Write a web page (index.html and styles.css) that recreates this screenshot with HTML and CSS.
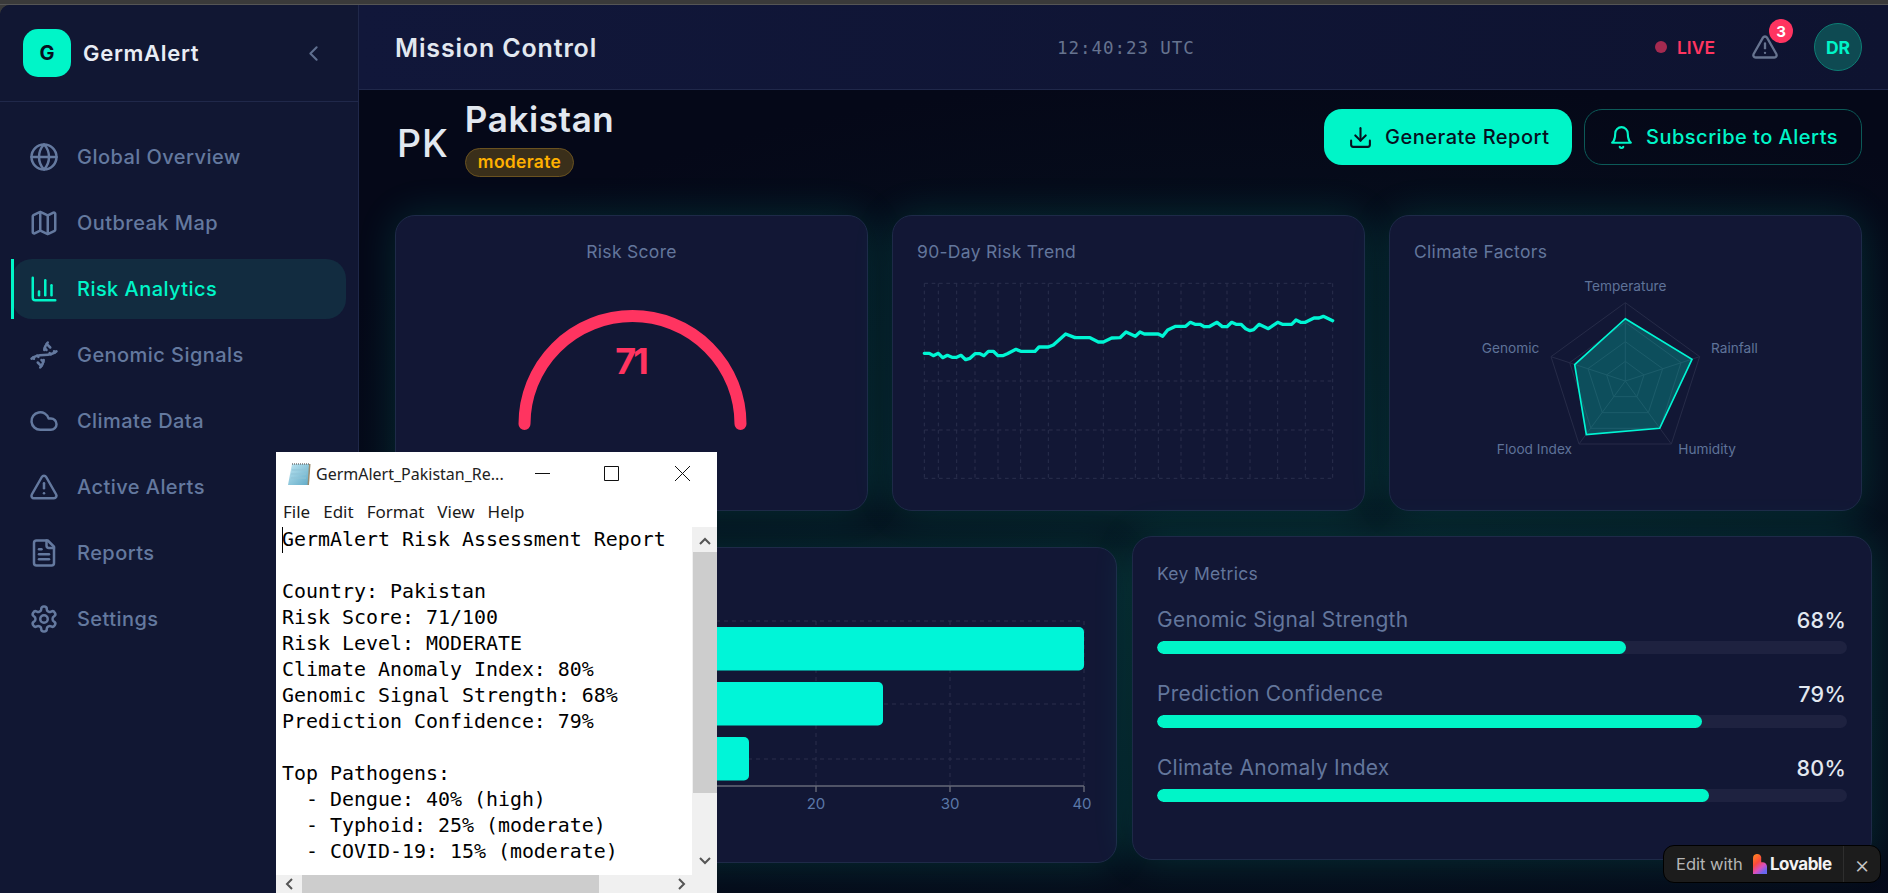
FILE: index.html
```html
<!DOCTYPE html>
<html lang="en">
<head>
<meta charset="utf-8">
<title>GermAlert</title>
<link rel="stylesheet" href="styles.css">
</head>
<body>
<div class="chrome"></div>
<div class="shell">
  <aside class="sidebar">
    <div class="brand">
      <div class="logo">G</div>
      <span class="brand-name">GermAlert</span>
      <svg class="ic chev" viewBox="0 0 24 24"><path d="m15 18-6-6 6-6"/></svg>
    </div>
    <nav class="nav">
      <a class="nav-item"><svg class="ic" viewBox="0 0 24 24"><circle cx="12" cy="12" r="10"/><path d="M12 2a14.5 14.5 0 0 0 0 20 14.5 14.5 0 0 0 0-20"/><path d="M2 12h20"/></svg>Global Overview</a>
      <a class="nav-item"><svg class="ic" viewBox="0 0 24 24"><path d="M14.106 5.553a2 2 0 0 0 1.788 0l3.659-1.83A1 1 0 0 1 21 4.619v12.764a1 1 0 0 1-.553.894l-4.553 2.277a2 2 0 0 1-1.788 0l-4.212-2.106a2 2 0 0 0-1.788 0l-3.659 1.83A1 1 0 0 1 3 19.381V6.618a1 1 0 0 1 .553-.894l4.553-2.277a2 2 0 0 1 1.788 0z"/><path d="M15 5.764v15"/><path d="M9 3.236v15"/></svg>Outbreak Map</a>
      <a class="nav-item active"><svg class="ic" viewBox="0 0 24 24"><path d="M3 3v16a2 2 0 0 0 2 2h16"/><path d="M18 17V9"/><path d="M13 17V5"/><path d="M8 17v-3"/></svg>Risk Analytics</a>
      <a class="nav-item"><svg class="ic" viewBox="0 0 24 24"><path d="m10 16 1.5 1.5"/><path d="m14 8-1.5-1.5"/><path d="M15 2c-1.798 1.998-2.518 3.995-2.807 5.993"/><path d="m16.5 10.5 1 1"/><path d="m17 6-2.891-2.891"/><path d="M2 15c6.667-6 13.333 0 20-6"/><path d="m20 9 .891.891"/><path d="M3.109 14.109 4 15"/><path d="m6.5 12.5 1 1"/><path d="m7 18 2.891 2.891"/><path d="M9 22c1.798-1.998 2.518-3.995 2.807-5.993"/></svg>Genomic Signals</a>
      <a class="nav-item"><svg class="ic" viewBox="0 0 24 24"><path d="M17.5 19H9a7 7 0 1 1 6.71-9h1.79a4.5 4.5 0 1 1 0 9Z"/></svg>Climate Data</a>
      <a class="nav-item"><svg class="ic" viewBox="0 0 24 24"><path d="m21.73 18-8-14a2 2 0 0 0-3.48 0l-8 14A2 2 0 0 0 4 21h16a2 2 0 0 0 1.73-3"/><path d="M12 9v4"/><path d="M12 17h.01"/></svg>Active Alerts</a>
      <a class="nav-item"><svg class="ic" viewBox="0 0 24 24"><path d="M15 2H6a2 2 0 0 0-2 2v16a2 2 0 0 0 2 2h12a2 2 0 0 0 2-2V7Z"/><path d="M14 2v4a2 2 0 0 0 2 2h4"/><path d="M10 9H8"/><path d="M16 13H8"/><path d="M16 17H8"/></svg>Reports</a>
      <a class="nav-item"><svg class="ic" viewBox="0 0 24 24"><path d="M12.22 2h-.44a2 2 0 0 0-2 2v.18a2 2 0 0 1-1 1.73l-.43.25a2 2 0 0 1-2 0l-.15-.08a2 2 0 0 0-2.73.73l-.22.38a2 2 0 0 0 .73 2.73l.15.1a2 2 0 0 1 1 1.72v.51a2 2 0 0 1-1 1.74l-.15.09a2 2 0 0 0-.73 2.73l.22.38a2 2 0 0 0 2.73.73l.15-.08a2 2 0 0 1 2 0l.43.25a2 2 0 0 1 1 1.73V20a2 2 0 0 0 2 2h.44a2 2 0 0 0 2-2v-.18a2 2 0 0 1 1-1.73l.43-.25a2 2 0 0 1 2 0l.15.08a2 2 0 0 0 2.73-.73l.22-.39a2 2 0 0 0-.73-2.73l-.15-.08a2 2 0 0 1-1-1.74v-.5a2 2 0 0 1 1-1.74l.15-.09a2 2 0 0 0 .73-2.73l-.22-.38a2 2 0 0 0-2.73-.73l-.15.08a2 2 0 0 1-2 0l-.43-.25a2 2 0 0 1-1-1.73V4a2 2 0 0 0-2-2z"/><circle cx="12" cy="12" r="3"/></svg>Settings</a>
    </nav>
  </aside>

  <div class="main">
    <header class="topbar">
      <h1 class="page-title">Mission Control</h1>
      <div class="clock">12:40:23 UTC</div>
      <div class="top-right">
        <div class="live"><span class="live-dot"></span>LIVE</div>
        <div class="alert-btn">
          <svg class="ic alert-ic" viewBox="0 0 24 24"><path d="m21.73 18-8-14a2 2 0 0 0-3.48 0l-8 14A2 2 0 0 0 4 21h16a2 2 0 0 0 1.73-3"/><path d="M12 9v4"/><path d="M12 17h.01"/></svg>
          <span class="count">3</span>
        </div>
        <div class="avatar">DR</div>
      </div>
    </header>

    <main class="content">
      <section class="title-row">
        <div class="country">
          <div class="code">PK</div>
          <div class="country-info">
            <div class="country-name">Pakistan</div>
            <span class="level">moderate</span>
          </div>
        </div>
        <div class="actions">
          <button class="btn btn-solid"><svg class="ic" viewBox="0 0 24 24"><path d="M21 15v4a2 2 0 0 1-2 2H5a2 2 0 0 1-2-2v-4"/><polyline points="7 10 12 15 17 10"/><line x1="12" y1="15" x2="12" y2="3"/></svg>Generate Report</button>
          <button class="btn btn-outline"><svg class="ic" viewBox="0 0 24 24"><path d="M6 8a6 6 0 0 1 12 0c0 7 3 9 3 9H3s3-2 3-9"/><path d="M10.3 21a1.94 1.94 0 0 0 3.4 0"/></svg>Subscribe to Alerts</button>
        </div>
      </section>

      <section class="row-one">
        <div class="card">
          <div class="card-title center">Risk Score</div>
          <svg class="chart" viewBox="420 265 422 220">
            <path class="gauge" d="M524 424a108 108 0 0 1 216 0"/>
            <text class="gauge-num" x="630" y="374" text-anchor="middle">71</text>
          </svg>
        </div>
        <div class="card">
          <div class="card-title">90-Day Risk Trend</div>
          <svg class="chart" viewBox="82 165 1267 660">
            <g class="grid-l">
              <path d="M103 220H1328M103 513H1328M103 660H1328M103 805H1328"/>
              <path d="M103 220V805M145 220V805M200 220V805M255 220V805M324 220V805M392 220V805M475 220V805M557 220V805M640 220V805M736 220V805M805 220V805M873 220V805M942 220V805M1011 220V805M1080 220V805M1163 220V805M1246 220V805M1328 220V805"/>
            </g>
            <polyline class="trend" points="103,430 118,430 130,437 145,430 158,443 172,436 186,442 200,442 213,436 227,449 240,445 255,431 270,431 282,437 295,424 310,424 324,437 338,437 352,431 378,418 392,424 435,424 447,411 475,411 490,405 527,372 555,383 600,383 625,396 640,396 665,384 690,383 708,366 736,379 750,366 763,372 805,372 818,379 833,360 857,349 887,349 901,337 915,343 930,343 943,350 957,350 981,337 997,350 1011,350 1025,337 1038,343 1053,343 1067,356 1080,362 1091,359 1107,343 1135,356 1163,337 1177,343 1205,343 1218,330 1232,337 1246,337 1272,324 1287,324 1300,319 1328,332"/>
          </svg>
        </div>
        <div class="card">
          <div class="card-title">Climate Factors</div>
          <svg class="chart" viewBox="104 165 1267 660">
            <g class="grid-r">
              <polygon points="737,278 960,440 875,702 598,702 514,440"/>
              <polygon points="737,337 904,458 841,655 634,655 570,458"/>
              <polygon points="737,395 849,476 806,608 668,608 625,476"/>
              <polygon points="737,454 793,495 772,560 702,560 681,495"/>
              <path d="M737 513V278M737 513L960 440M737 513L875 702M737 513L598 702M737 513L514 440"/>
            </g>
            <polygon class="radar" points="737,326 937,448 840,655 620,674 585,464"/>
            <g class="radar-label">
              <text x="737" y="243" text-anchor="middle">Temperature</text>
              <text x="994" y="429">Rainfall</text>
              <text x="896" y="732">Humidity</text>
              <text x="577" y="732" text-anchor="end">Flood Index</text>
              <text x="479" y="429" text-anchor="end">Genomic</text>
            </g>
          </svg>
        </div>
      </section>

      <section class="row-two">
        <div class="card card-bars">
          <svg class="bars" viewBox="420 600 672 236">
            <g class="grid-b">
              <path d="M548 621H1084M548 649H1084M548 704H1084M548 759H1084"/>
              <path d="M548 621V786M682 621V786M816 621V786M950 621V786M1084 621V786"/>
            </g>
            <rect class="bar" x="548" y="627" width="536" height="43.5" rx="5"/>
            <rect class="bar" x="548" y="682" width="335" height="43.5" rx="5"/>
            <rect class="bar" x="548" y="737" width="201" height="43.5" rx="5"/>
            <path class="axis" d="M548 786H1084M816 786v6M950 786v6M1084 786v6M682 786v6M548 786v6"/>
            <g class="tick">
              <text x="816" y="809" text-anchor="middle">20</text>
              <text x="950" y="809" text-anchor="middle">30</text>
              <text x="1082" y="809" text-anchor="middle">40</text>
            </g>
          </svg>
        </div>
        <div class="card card-metrics">
          <div class="card-title">Key Metrics</div>
          <div class="metric">
            <div class="metric-head"><span>Genomic Signal Strength</span><b>68%</b></div>
            <div class="track"><div class="fill" style="width:68%"></div></div>
          </div>
          <div class="metric">
            <div class="metric-head"><span>Prediction Confidence</span><b>79%</b></div>
            <div class="track"><div class="fill" style="width:79%"></div></div>
          </div>
          <div class="metric">
            <div class="metric-head"><span>Climate Anomaly Index</span><b>80%</b></div>
            <div class="track"><div class="fill" style="width:80%"></div></div>
          </div>
        </div>
      </section>
    </main>
  </div>
</div>

<div class="notepad">
  <div class="np-title">
    <svg class="np-icon" viewBox="0 0 24 24">
      <defs><linearGradient id="npg" x1="0" y1="0" x2="1" y2="1"><stop offset="0" stop-color="#bfe6f2"/><stop offset="1" stop-color="#5fa9c6"/></linearGradient></defs>
      <polygon points="5,2 23,2 21,23 1,23" fill="url(#npg)"/>
      <polygon points="22,2 23.5,2 22,23 20.5,23" fill="#9a8a6c"/>
      <path d="M5 2h18" stroke="#777" stroke-width="1.6" stroke-dasharray="1 1"/>
      <path d="M5 8h15M4 12h15M4 16h15" stroke="#8fc3d6" stroke-width="1"/>
    </svg>
    <span class="np-name">GermAlert_Pakistan_Re...</span>
    <svg class="np-ctrl" viewBox="0 0 170 20"><path d="M0 10.5h15M69.5 3.5h14v14h-14zM140 3l15 15M155 3l-15 15"/></svg>
  </div>
  <div class="np-menu"><span>File</span><span>Edit</span><span>Format</span><span>View</span><span>Help</span></div>
  <div class="np-body">
    <pre class="np-text">GermAlert Risk Assessment Report

Country: Pakistan
Risk Score: 71/100
Risk Level: MODERATE
Climate Anomaly Index: 80%
Genomic Signal Strength: 68%
Prediction Confidence: 79%

Top Pathogens:
  - Dengue: 40% (high)
  - Typhoid: 25% (moderate)
  - COVID-19: 15% (moderate)</pre>
    <div class="np-vscroll">
      <svg class="np-arrow" viewBox="0 0 12 8"><path d="M1 7l5-5 5 5"/></svg>
      <div class="np-vthumb"></div>
      <svg class="np-arrow np-down" viewBox="0 0 12 8"><path d="M1 1l5 5 5-5"/></svg>
    </div>
  </div>
  <div class="np-hscroll">
    <svg class="np-arrow-h" viewBox="0 0 8 12"><path d="M7 1L2 6l5 5"/></svg>
    <div class="np-hthumb"></div>
    <svg class="np-arrow-h" viewBox="0 0 8 12"><path d="M1 1l5 5-5 5"/></svg>
  </div>
</div>

<div class="lovable">
  <span class="lov-edit">Edit with</span>
  <svg class="lov-logo" viewBox="0 0 14 20">
    <defs><linearGradient id="lovg" x1="0" y1="0" x2="0.6" y2="1"><stop offset="0" stop-color="#ff8a1e"/><stop offset=".45" stop-color="#fb4a3c"/><stop offset=".75" stop-color="#d94fc0"/><stop offset="1" stop-color="#6a66ee"/></linearGradient></defs>
    <path d="M0 4.2A4.2 4.2 0 0 1 8.2 3V8.2h1.4A4.4 4.4 0 0 1 14 12.6V20H0z" fill="url(#lovg)"/>
  </svg>
  <span class="lov-name">Lovable</span>
  <span class="lov-x">×</span>
</div>
</body>
</html>
```

FILE: styles.css
```css
* { box-sizing: border-box; }
html, body { margin: 0; height: 100%; overflow: hidden; }
body { background: #3a3a3a; font-family: Inter, "Liberation Sans", sans-serif; color: #e2e8f0; }
.chrome { height: 5px; background: #3a3a3a; border-bottom: 1px solid #555; }
.shell { display: flex; height: 888px; background: #111733; border-radius: 10px 0 0 0; overflow: hidden; }
.ic { fill: none; stroke: currentColor; stroke-width: 2; stroke-linecap: round; stroke-linejoin: round; width: 30px; height: 30px; flex: none; }

.sidebar { width: 359px; flex: none; background: #111733; border-right: 1px solid #20284a; }
.brand { height: 97px; display: flex; align-items: center; padding: 0 32px 0 23px; border-bottom: 1px solid #20284a; }
.logo { width: 48px; height: 48px; border-radius: 15px; background: #00f5c8; color: #07101f; font-weight: 700; font-size: 20px; display: flex; align-items: center; justify-content: center; }
.brand-name { margin-left: 12px; font-size: 22px; font-weight: 600; letter-spacing: .7px; color: #e8edf5; flex: 1; }
.chev { color: #5f6f8f; width: 25px; height: 25px; }
.nav { padding: 25px 12px 0; display: flex; flex-direction: column; gap: 6px; }
.nav-item { height: 60px; display: flex; align-items: center; gap: 18px; padding: 0 15px 0 17px; font-size: 20px; font-weight: 500; letter-spacing: .45px; color: #64799f; border-radius: 20px; }
.nav-item .ic { color: #64799f; width: 30px; height: 30px; }
.nav-item.active { background: #122c40; color: #00f5c8; position: relative; }
.nav-item.active .ic { color: #00f5c8; }
.nav-item.active::before { content: ""; position: absolute; left: -1px; top: 0; bottom: 0; width: 3px; background: #00f5c8; }

.main { flex: 1; min-width: 0; background: #050818; display: flex; flex-direction: column; }
.topbar { height: 85px; flex: none; display: flex; align-items: center; padding: 0 26px 0 36px; background: linear-gradient(90deg, #11173a, #0e1330); border-bottom: 1px solid #20284a; position: relative; }
.page-title { margin: 2px 0 0; font-size: 25px; font-weight: 600; letter-spacing: .85px; color: #e2e8f0; width: 662px; flex: none; }
.clock { margin-top: 2px; font-family: "DejaVu Sans Mono", monospace; font-size: 17.5px; letter-spacing: .95px; color: #66738f; }
.top-right { margin-left: auto; display: flex; align-items: center; }
.live { display: flex; align-items: center; gap: 10px; color: #ff3560; font-weight: 600; font-size: 17.5px; }
.live-dot { width: 12px; height: 12px; border-radius: 50%; background: #a52a50; }
.alert-btn { position: relative; margin-left: 36px; margin-right: 35px; display: flex; }
.alert-ic { width: 28px; height: 28px; color: #66738f; }
.count { position: absolute; right: -14px; top: -14px; width: 24px; height: 24px; border-radius: 50%; background: #ff3460; color: #fff; font-size: 15px; font-weight: 700; display: flex; align-items: center; justify-content: center; }
.avatar { width: 48px; height: 48px; border-radius: 50%; background: #0e4a52; border: 1px solid #0d7d74; color: #00f5c8; font-weight: 700; font-size: 17.5px; display: flex; align-items: center; justify-content: center; }

.content { flex: 1; padding: 7px 26px 0 36px; background: radial-gradient(1100px 500px at 60% 60%, #071722 0%, #050818 100%); }
.title-row { display: flex; align-items: center; justify-content: space-between; height: 80px; }
.country { display: flex; align-items: center; gap: 16px; }
.code { font-size: 37.5px; font-weight: 500; line-height: 45px; padding-top: 12px; letter-spacing: 1px; color: #e2e8f0; margin-left: 2px; }
.country-name { font-size: 35px; font-weight: 600; line-height: 44px; letter-spacing: .6px; color: #e2e8f0; }
.level { display: inline-block; margin-top: 7px; height: 29px; line-height: 26px; padding: 0 12px; border-radius: 15px; background: #3a2f1a; border: 1px solid #6a5220; color: #ffb000; font-size: 17.5px; font-weight: 600; letter-spacing: .3px; vertical-align: top; }
.actions { display: flex; gap: 12px; }
.btn { height: 56px; border-radius: 18px; display: flex; align-items: center; gap: 12px; font-family: inherit; font-size: 20px; font-weight: 500; letter-spacing: .5px; padding: 0 0 0 24px; white-space: nowrap; }
.btn .ic { width: 25px; height: 25px; }
.btn-solid { background: #00f5c8; border: 0; color: #07101f; width: 248px; }
.btn-outline { background: transparent; border: 1px solid #0c5a58; color: #00f5c8; width: 278px; }

.card { background: #121735; border: 1px solid #1e2a48; border-radius: 20px; padding: 24px; box-shadow: 0 0 40px rgba(0, 245, 200, .14); }
.card-title { font-size: 17.5px; line-height: 25px; letter-spacing: .3px; color: #63769c; }
.center { text-align: center; }
.chart { display: block; width: 100%; height: 220px; }
.row-one { display: grid; grid-template-columns: repeat(3, 1fr); gap: 24px; margin-top: 38px; }
.row-one .card { height: 296px; padding-top: 23px; }
.row-one .card-title { line-height: 26px; }
.row-two { display: grid; grid-template-columns: 722px 740px; gap: 15px; margin: 25px -10px 0 0; align-items: start; }
.card-bars { height: 316px; margin-top: 11px; padding-top: 52px; }
.bars { display: block; width: 672px; height: 236px; }
.card-metrics { height: 324px; }

.gauge { fill: none; stroke: #ff3460; stroke-width: 12; stroke-linecap: round; }
.gauge-num { fill: #ff3460; font-size: 36px; font-weight: 700; letter-spacing: -3px; }
.grid-l path { fill: none; stroke: #2a2f4c; stroke-width: 3; stroke-dasharray: 11 11; }
.trend { fill: none; stroke: #00f5d4; stroke-width: 10; stroke-linejoin: round; stroke-linecap: round; }
.grid-r polygon, .grid-r path { fill: none; stroke: #262b48; stroke-width: 3; }
.radar { fill: rgba(0, 245, 212, .25); stroke: #00f5d4; stroke-width: 5; }
.radar-label text { fill: #5f7399; font-size: 41px; font-family: Inter, sans-serif; }
.grid-b path { fill: none; stroke: #2a2f4c; stroke-width: 1; stroke-dasharray: 4 4; }
.bar { fill: #00f5d8; }
.axis { fill: none; stroke: #666a78; stroke-width: 1.4; }
.tick text { fill: #5b78a8; font-size: 15px; }

.metric { margin-top: 20px; }
.metric + .metric { margin-top: 26.5px; }
.metric-head { display: flex; justify-content: space-between; font-size: 21px; line-height: 28px; letter-spacing: .25px; color: #63769c; padding-right: 1px; }
.metric-head b { color: #e2e8f0; font-weight: 500; font-size: 21.5px; }
.track { height: 13px; margin-top: 6.5px; border-radius: 7px; background: #1e2240; overflow: hidden; }
.fill { height: 100%; border-radius: 7px; background: #00f5c8; }

.notepad { position: absolute; left: 276px; top: 452px; width: 441px; height: 441px; background: #fff; color: #000; overflow: hidden; font-family: "Noto Sans", "Open Sans", sans-serif; }
.np-title { height: 44px; display: flex; align-items: center; padding: 0 27px 0 11px; position: relative; }
.np-icon { width: 24px; height: 24px; flex: none; }
.np-name { margin-left: 5px; font-size: 16px; color: #222; white-space: nowrap; }
.np-ctrl { position: absolute; left: 259px; top: 11px; width: 170px; height: 20px; fill: none; stroke: #111; stroke-width: 1; }
.np-menu { height: 31px; display: flex; align-items: center; padding-left: 7px; gap: 13px; font-size: 17px; color: #1a1a1a; }
.np-body { height: 348px; display: flex; }
.np-text { flex: 1; margin: 0; padding: 0 0 0 6px; font-family: "DejaVu Sans Mono", monospace; font-size: 19.93px; line-height: 26px; color: #000; position: relative; overflow: hidden; }
.np-text::before { content: ""; position: absolute; left: 6px; top: 0; width: 1px; height: 26px; background: #000; }
.np-vscroll { width: 25px; background: #f0f0f0; display: flex; flex-direction: column; align-items: center; }
.np-arrow { width: 12px; height: 8px; margin: 10px 0 7px; fill: none; stroke: #555; stroke-width: 2; flex: none; }
.np-down { margin: auto 0 10px; }
.np-vthumb { width: 24px; height: 241px; background: #cdcdcd; }
.np-hscroll { height: 18px; background: #f0f0f0; display: flex; align-items: center; }
.np-arrow-h { width: 8px; height: 12px; margin: 0 9px; fill: none; stroke: #555; stroke-width: 2; flex: none; }
.np-hthumb { width: 297px; height: 18px; background: #cdcdcd; margin-right: 70px; }

.lovable { position: absolute; left: 1663px; top: 845px; width: 218px; height: 38px; background: #1c1c1c; border: 1px solid #000; border-radius: 11px; display: flex; align-items: center; padding-left: 12px; font-size: 16.5px; color: #b5b5b5; }
.lov-edit { width: 77px; }
.lov-logo { width: 14px; height: 20px; flex: none; }
.lov-name { margin-left: 3px; width: 74px; font-weight: 700; color: #f2f2f2; font-size: 17px; letter-spacing: -.5px; border-right: 1px solid #2e2e2e; line-height: 36px; }
.lov-x { flex: 1; text-align: center; font-size: 24px; font-weight: 300; color: #c5c5c5; }
```
